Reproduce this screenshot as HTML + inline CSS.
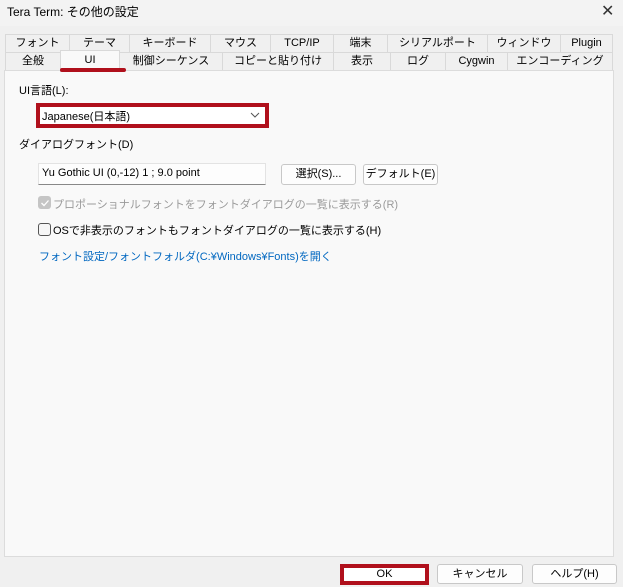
<!DOCTYPE html><html><head><meta charset="utf-8"><style>
*{box-sizing:border-box;margin:0;padding:0}
body{width:623px;height:587px;background:#f0f0f0;font-family:"Liberation Sans","Noto Sans CJK JP",sans-serif;font-size:11px;color:#000;position:relative;overflow:hidden}
.a{position:absolute;white-space:nowrap}
.tab{position:absolute;height:19px;border:1px solid #d9d9d9;border-bottom:none;background:#f0f0f0;text-align:center;line-height:17px;font-size:11px;white-space:nowrap}
.btn{position:absolute;height:21px;border:1px solid #c8c8c8;border-radius:3px;background:#fdfdfd;text-align:center;line-height:19px;white-space:nowrap}
</style></head><body>
<div style="position:absolute;left:0;top:0;width:623px;height:26px;background:#f3f3f3"></div>
<div class="a" style="left:7px;top:3px;font-size:12px">Tera Term: その他の設定</div>
<div class="a" style="left:601px;top:1px;font-size:16px;color:#333">✕</div>

<div class="tab" style="left:5px;top:34px;width:65px">フォント</div>
<div class="tab" style="left:69px;top:34px;width:61px">テーマ</div>
<div class="tab" style="left:129px;top:34px;width:82px">キーボード</div>
<div class="tab" style="left:210px;top:34px;width:61px">マウス</div>
<div class="tab" style="left:270px;top:34px;width:64px">TCP/IP</div>
<div class="tab" style="left:333px;top:34px;width:55px">端末</div>
<div class="tab" style="left:387px;top:34px;width:101px">シリアルポート</div>
<div class="tab" style="left:487px;top:34px;width:74px">ウィンドウ</div>
<div class="tab" style="left:560px;top:34px;width:53px">Plugin</div>

<div class="tab" style="left:5px;top:52px;width:56px">全般</div>
<div class="tab" style="left:119px;top:52px;width:104px">制御シーケンス</div>
<div class="tab" style="left:222px;top:52px;width:112px">コピーと貼り付け</div>
<div class="tab" style="left:333px;top:52px;width:58px">表示</div>
<div class="tab" style="left:390px;top:52px;width:56px">ログ</div>
<div class="tab" style="left:445px;top:52px;width:63px">Cygwin</div>
<div class="tab" style="left:507px;top:52px;width:106px">エンコーディング</div>

<div style="position:absolute;left:4px;top:70px;width:610px;height:487px;background:#f9f9f9;border:1px solid #dcdcdc"></div>
<div class="tab" style="left:60px;top:50px;width:60px;height:22px;background:#f9f9f9;line-height:19px;z-index:2">UI</div>
<div style="position:absolute;left:60px;top:68px;width:66px;height:4px;background:#b0101c;border-radius:2px;z-index:3"></div>

<div class="a" style="left:19px;top:82px">UI言語(L):</div>
<div style="position:absolute;left:36px;top:103px;width:233px;height:25px;border:4px solid #b0101c;background:#fff"></div>
<div class="a" style="left:42px;top:108px">Japanese(日本語)</div>
<svg class="a" style="left:250px;top:112px" width="10" height="6"><path d="M1 1L5 5L9 1" fill="none" stroke="#555" stroke-width="1"/></svg>

<div class="a" style="left:19px;top:136px">ダイアログフォント(D)</div>
<div style="position:absolute;left:38px;top:163px;width:228px;height:22px;background:#fdfdfd;border:1px solid #e3e3e3;border-bottom:1px solid #888"></div>
<div class="a" style="left:42px;top:167px">Yu Gothic UI (0,-12) 1 ; 9.0 point</div>
<div class="btn" style="left:281px;top:164px;width:75px">選択(S)...</div>
<div class="btn" style="left:363px;top:164px;width:75px">デフォルト(E)</div>

<div style="position:absolute;left:38px;top:196px;width:13px;height:13px;background:#c5c5c5;border-radius:3px"></div>
<svg class="a" style="left:40px;top:198px" width="10" height="10"><path d="M1.5 5L4 7.5L8.5 2.5" fill="none" stroke="#fff" stroke-width="1.3"/></svg>
<div class="a" style="left:53px;top:196px;color:#9a9a9a">プロポーショナルフォントをフォントダイアログの一覧に表示する(R)</div>
<div style="position:absolute;left:38px;top:223px;width:13px;height:13px;border:1px solid #555;border-radius:3px;background:#f6f6f6"></div>
<div class="a" style="left:53px;top:222px">OSで非表示のフォントもフォントダイアログの一覧に表示する(H)</div>
<div class="a" style="left:39px;top:248px;color:#0067c0">フォント設定/フォントフォルダ(C:¥Windows¥Fonts)を開く</div>

<div style="position:absolute;left:340px;top:564px;width:89px;height:21px;border:4px solid #b0101c;background:#fff;text-align:center;line-height:13px">OK</div>
<div class="btn" style="left:437px;top:564px;width:86px;height:20px;line-height:18px">キャンセル</div>
<div class="btn" style="left:532px;top:564px;width:85px;height:20px;line-height:18px">ヘルプ(H)</div>
</body></html>
